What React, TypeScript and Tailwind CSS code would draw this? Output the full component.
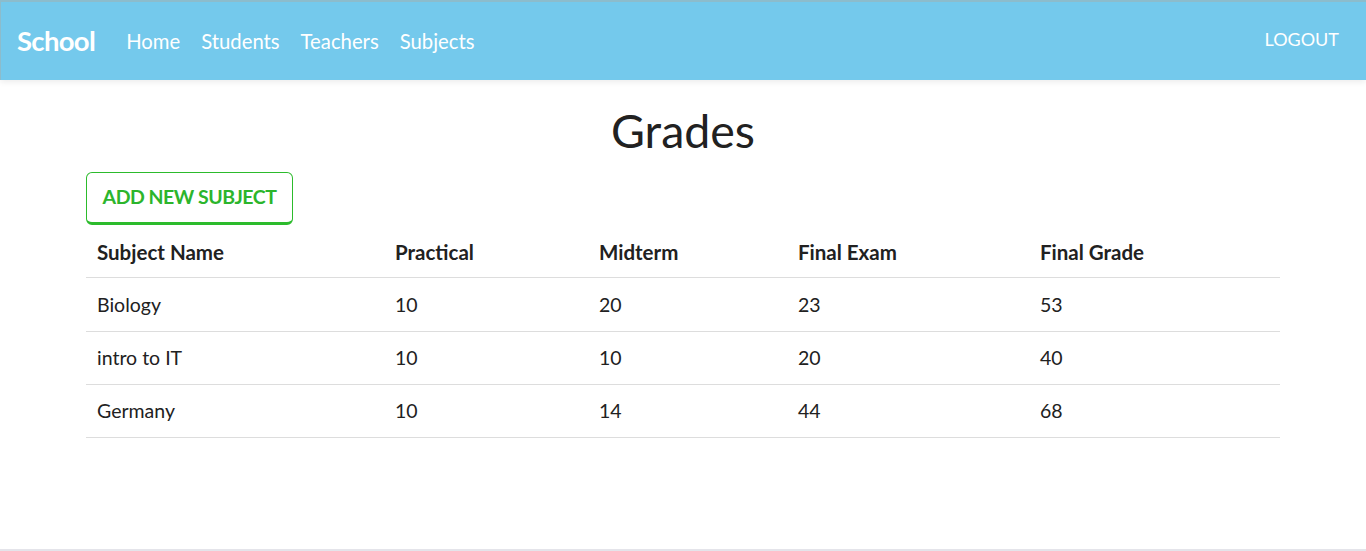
const rows = [
  { name: "Biology", practical: 10, midterm: 20, final: 23, grade: 53 },
  { name: "intro to IT", practical: 10, midterm: 10, final: 20, grade: 40 },
  { name: "Germany", practical: 10, midterm: 14, final: 44, grade: 68 },
];

export default function App() {
  return (
    <div className="h-[551px] overflow-hidden flex flex-col bg-white font-['Lato','Open_Sans',sans-serif] text-[#212121]">
      <nav className="h-20 shrink-0 bg-[#74c9ec] border-t-2 border-l border-[#8cbccc] flex items-center px-4 shadow-[0_2px_6px_rgba(0,0,0,0.08)]">
        <span className="text-[27.5px] font-bold text-white mr-[31px] tracking-tight">School</span>
        <div className="flex gap-[21px] text-[20.3px] text-white">
          <a>Home</a>
          <a>Students</a>
          <a>Teachers</a>
          <a>Subjects</a>
        </div>
        <a className="ml-auto mr-[11px] text-[18px] text-white -mt-1">LOGOUT</a>
      </nav>

      <div className="flex-1 px-[86px] border-b-2 border-[#e4e4ea]">
        <h1 className="text-center text-[46.5px] leading-none pt-[27px] pb-[18px] text-[#212121]">Grades</h1>
        <button className="h-[53px] w-[207px] rounded-[6px] border border-b-[3px] border-[#2cbb2c] text-[#2cb52c] text-[19.5px] font-bold tracking-tight">
          ADD NEW SUBJECT
        </button>
        <table className="w-full text-left text-[19.5px] border-collapse mt-[3px]">
          <thead>
            <tr className="border-b border-[#dddddd] text-[20.5px]">
              <th className="h-[50px] pl-[11px] font-bold w-[298px]">Subject Name</th>
              <th className="pl-[11px] font-bold w-[204px]">Practical</th>
              <th className="pl-[11px] font-bold w-[199px]">Midterm</th>
              <th className="pl-[11px] font-bold w-[242px]">Final Exam</th>
              <th className="pl-[11px] font-bold">Final Grade</th>
            </tr>
          </thead>
          <tbody>
            {rows.map((r, i) => (
              <tr key={r.name} className="border-b border-[#dddddd]">
                <td className={i === 0 ? "h-[54px] pl-[11px] pt-[1px]" : "h-[53px] pl-[11px]"}>{r.name}</td>
                <td className="pl-[11px]">{r.practical}</td>
                <td className="pl-[11px]">{r.midterm}</td>
                <td className="pl-[11px]">{r.final}</td>
                <td className="pl-[11px]">{r.grade}</td>
              </tr>
            ))}
          </tbody>
        </table>
      </div>
    </div>
  );
}
